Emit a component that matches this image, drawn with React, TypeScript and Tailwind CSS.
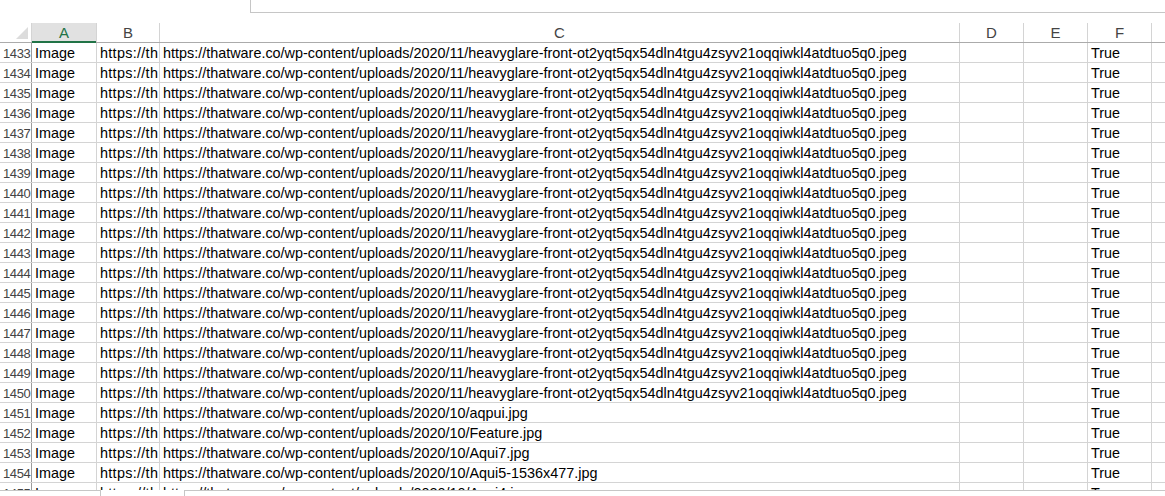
import React from 'react';

const heavy = 'https://thatware.co/wp-content/uploads/2020/11/heavyglare-front-ot2yqt5qx54dln4tgu4zsyv21oqqiwkl4atdtuo5q0.jpeg';

const rows: { n: number; url: string }[] = [
  ...Array.from({ length: 18 }).map((_, i) => ({ n: 1433 + i, url: heavy })),
  { n: 1451, url: 'https://thatware.co/wp-content/uploads/2020/10/aqpui.jpg' },
  { n: 1452, url: 'https://thatware.co/wp-content/uploads/2020/10/Feature.jpg' },
  { n: 1453, url: 'https://thatware.co/wp-content/uploads/2020/10/Aqui7.jpg' },
  { n: 1454, url: 'https://thatware.co/wp-content/uploads/2020/10/Aqui5-1536x477.jpg' },
  { n: 1455, url: 'https://thatware.co/wp-content/uploads/2020/10/Aqui4.jpg' },
];

const cell = 'h-full shrink-0 border-r border-[#d4d4d4] overflow-hidden whitespace-nowrap pl-[3px] leading-[21px]';

export default function App() {
  return (
    <div
      className="h-[496px] w-[1165px] overflow-hidden bg-white relative text-[14.4px] text-black"
      style={{ fontFamily: '"Liberation Sans", Arial, sans-serif' }}
    >
      {/* formula bar edge */}
      <div className="h-[13px] flex">
        <div className="w-[250px]" />
        <div className="flex-1 border-l border-b border-[#c6c6c6]" />
      </div>
      <div className="h-[10px]" />

      {/* column headers */}
      <div className="flex h-[20px] border-b border-[#ababab] text-[15px] text-[#444]">
        <div className="w-[32px] shrink-0 h-full border-r border-[#d4d4d4] relative">
          <div className="absolute right-[3px] bottom-[3px] w-0 h-0 border-l-[12px] border-l-transparent border-b-[12px] border-b-[#dcdcdc]" />
        </div>
        <div className="w-[65px] shrink-0 h-full border-r border-[#d4d4d4] bg-[#e1e1e1] text-[#217346] text-center leading-[20px] relative">
          A
          <div className="absolute left-0 right-0 bottom-[-1px] h-[2px] bg-[#217346]" />
        </div>
        <div className="w-[63px] shrink-0 h-full border-r border-[#d4d4d4] text-center leading-[20px]">B</div>
        <div className="w-[800px] shrink-0 h-full border-r border-[#d4d4d4] text-center leading-[20px]">C</div>
        <div className="w-[64px] shrink-0 h-full border-r border-[#d4d4d4] text-center leading-[20px]">D</div>
        <div className="w-[64px] shrink-0 h-full border-r border-[#d4d4d4] text-center leading-[20px]">E</div>
        <div className="w-[64px] shrink-0 h-full border-r border-[#d4d4d4] text-center leading-[20px]">F</div>
        <div className="flex-1" />
      </div>

      {/* data rows */}
      {rows.map((r) => (
        <div key={r.n} className="flex h-[20px] border-b border-[#d4d4d4]">
          <div className="w-[32px] shrink-0 h-full border-r border-[#9b9b9b] text-[#444] text-[13px] tracking-[-0.4px] pl-[3px] leading-[21px] overflow-hidden whitespace-nowrap">{r.n}</div>
          <div className={`${cell} w-[65px]`}>Image</div>
          <div className={`${cell} w-[63px] tracking-[0.3px]`}>https://th</div>
          <div className={`${cell} w-[800px]`}>{r.url}</div>
          <div className={`${cell} w-[64px]`} />
          <div className={`${cell} w-[64px]`} />
          <div className={`${cell} w-[64px]`}>True</div>
          <div className="flex-1" />
        </div>
      ))}

      {/* sheet tab strip */}
      <div className="absolute left-0 right-0 top-[490px] h-[6px] bg-white flex">
        <div className="w-[100px] border-t border-[#c6c6c6]" />
        <div className="w-[85px] border-l border-r border-[#c6c6c6]" />
        <div className="flex-1 border-t border-[#c6c6c6]" />
      </div>
    </div>
  );
}
